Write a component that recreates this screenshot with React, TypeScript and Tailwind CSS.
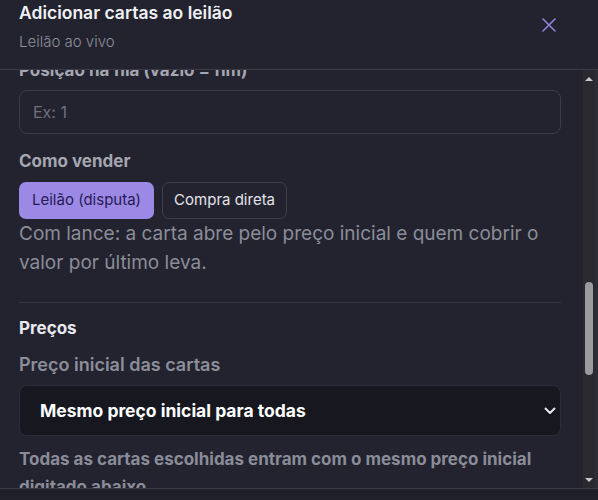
import React from 'react';

const font = "font-['Inter','Noto_Sans',sans-serif]";

function CloseIcon() {
  return (
    <svg width="14" height="14" viewBox="0 0 14 14" fill="none" stroke="#8f84d8" strokeWidth="1.6" strokeLinecap="round">
      <path d="M1 1L13 13M13 1L1 13" />
    </svg>
  );
}

function Chevron() {
  return (
    <svg width="12" height="8" viewBox="0 0 12 8" fill="none" stroke="#e6e6ec" strokeWidth="2" strokeLinecap="round" strokeLinejoin="round">
      <path d="M1.5 1.5L6 6L10.5 1.5" />
    </svg>
  );
}

function Scrollbar() {
  return (
    <div className="flex w-[15px] shrink-0">
      <div className="flex w-[12px] flex-col bg-[#2a292e]">
        <div className="flex h-[17px] items-center justify-center">
          <span className="h-0 w-0 border-x-[4px] border-b-[4px] border-x-transparent border-b-[#c9c9cc]" />
        </div>
        <div className="flex flex-1 justify-center pt-[195px]">
          <div className="h-[93px] w-[8px] rounded-full bg-[#9b9b9e]" />
        </div>
        <div className="flex h-[17px] items-center justify-center">
          <span className="h-0 w-0 border-x-[4px] border-t-[4px] border-x-transparent border-t-[#c9c9cc]" />
        </div>
      </div>
      <div className="w-[3px] bg-[#2c2d37]" />
    </div>
  );
}

export default function App() {
  return (
    <div className={`flex h-[500px] w-[598px] flex-col overflow-hidden bg-[#22232f] ${font}`}>
      <header className="flex h-[70px] shrink-0 items-start justify-between border-b border-[#3a3b47] pl-[19px] pr-[42px] pt-[1px]">
        <div>
          <h2 className="text-[17.5px] font-semibold leading-[24px] text-[#f1f1f5]">Adicionar cartas ao leilão</h2>
          <p className="mt-[7px] text-[15px] font-light leading-[20px] text-[#8e909b]">Leilão ao vivo</p>
        </div>
        <button className="mt-[17px]">
          <CloseIcon />
        </button>
      </header>

      <div className="flex min-h-0 flex-1">
        <div className="min-w-0 flex-1 overflow-hidden pl-[19px] pr-[22px]">
          <div className="-mt-[12px]">
            <label className="block text-[17px] font-bold leading-[24px] text-[#a5a7b0]">Posição na fila (vazio = fim)</label>
            <input
              placeholder="Ex: 1"
              className="mt-2 h-[44px] w-full rounded-lg border border-[#3a3c48] bg-transparent px-[13px] text-[16px] text-white outline-none placeholder:text-[#6f717c]"
            />

            <div className="mt-[15px] text-[17px] font-bold leading-[24px] text-[#a5a7b0]">Como vender</div>
            <div className="mt-[9px] flex gap-2">
              <button className="h-[37px] rounded-[7px] bg-[#9c89e6] px-[13px] text-[15px] text-[#251b55]">Leilão (disputa)</button>
              <button className="h-[37px] rounded-[7px] border border-[#3e3f4b] px-[11px] text-[15px] text-[#e4e4ea]">Compra direta</button>
            </div>
            <p className="text-[19px] leading-[29px] text-[#8b8d97]">
              Com lance: a carta abre pelo preço inicial e quem cobrir o valor por último leva.
            </p>

            <div className="mt-[25px] h-px bg-[#34353f]" />

            <div className="mt-[13px] text-[17px] font-bold leading-[24px] text-[#e9e9ef]">Preços</div>
            <div className="mt-[13px] text-[18px] font-semibold leading-[24px] text-[#8c8e99]">Preço inicial das cartas</div>
            <div className="mt-[8px] flex h-[51px] items-center justify-between rounded-lg border border-[#2b2c37] bg-[#16171f] pl-[20px] pr-[4px]">
              <span className="pt-[2px] text-[17.5px] font-bold text-white">Mesmo preço inicial para todas</span>
              <Chevron />
            </div>
            <p className="mt-[9px] text-[17px] font-bold leading-[28px] text-[#8a8c98]">
              Todas as cartas escolhidas entram com o mesmo preço inicial digitado abaixo.
            </p>
          </div>
        </div>
        <Scrollbar />
      </div>

      <div className="h-[12px] shrink-0 border-t border-[#3a3b47] bg-[#1f2029]" />
    </div>
  );
}
